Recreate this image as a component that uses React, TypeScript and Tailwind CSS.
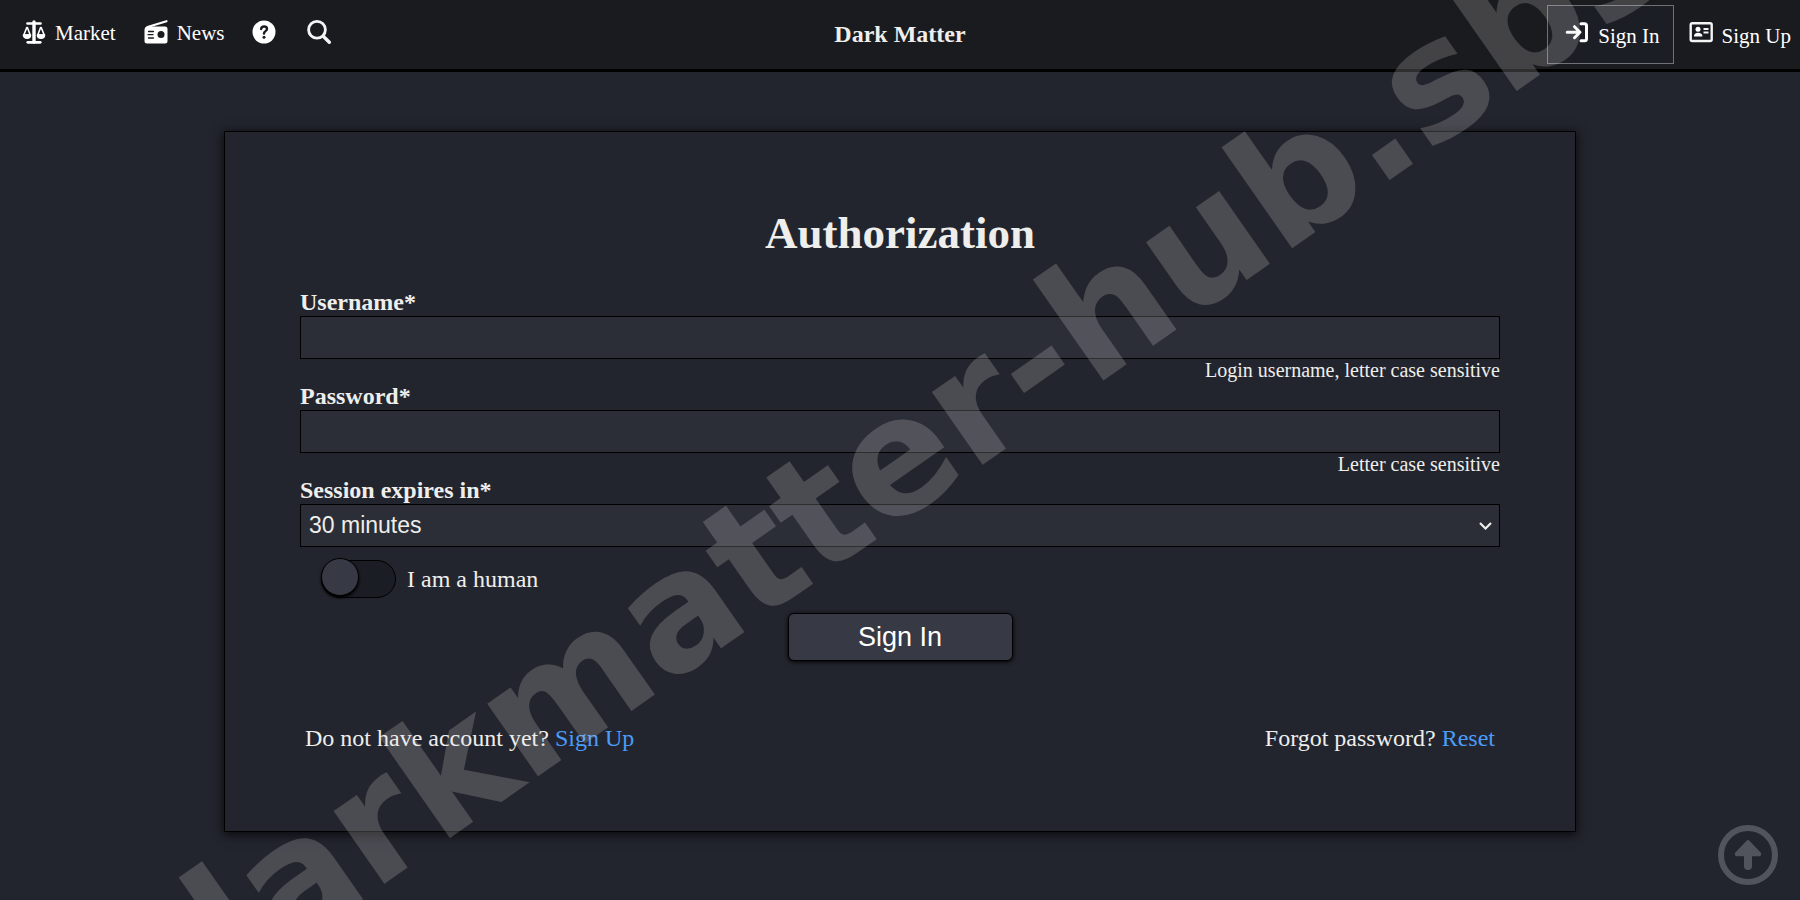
import type { ReactNode } from 'react';
import { useState } from 'react';

const MarketIcon = () => (
  <svg width="24" height="24" viewBox="0 0 24 24" fill="none" stroke="#fff" strokeWidth="1.6" strokeLinejoin="round" strokeLinecap="round">
    <path d="M12 2v20" strokeWidth="3.4" />
    <path d="M5.500 3.500h13" strokeWidth="2.600" />
    <path d="M5.800 22.300h12.400" strokeWidth="2.800" />
    <path d="M4.800 7.500 1.800 15h6.400L5.400 7.500Z" />
    <path d="M18.600 7.500 15.800 15h6.400l-3-7.500Z" />
    <path d="M1.500 15h7c0 4.200-7 4.200-7 0ZM15.500 15h7c0 4.200-7 4.200-7 0Z" fill="#fff" />
  </svg>
);

const NewsIcon = () => (
  <svg width="24" height="24" viewBox="0 0 24 24">
    <path d="M22.500 1.200 3.500 7" stroke="#fff" strokeWidth="2.200" strokeLinecap="round" />
    <path d="M3 6.500h18a2.500 2.500 0 0 1 2.500 2.500v12a2.500 2.500 0 0 1-2.500 2.500H3A2.500 2.500 0 0 1 .5 21V9.500A3 3 0 0 1 3 6.500Z" fill="#fff" />
    <circle cx="17" cy="14.500" r="3.500" fill="#1a1b1f" />
    <path d="M4.500 11.500h5M4 14.700h5M4.500 18h5" stroke="#1a1b1f" strokeWidth="1.300" strokeLinecap="round" />
  </svg>
);

const HelpIcon = () => (
  <svg width="24" height="24" viewBox="0 0 24 24" fill="none">
    <circle cx="12" cy="12" r="11.500" fill="#fff" />
    <path d="M9.200 9c.2-3.300 5.800-3.200 5.800-.1 0 2.200-3 2.200-3 4.600" stroke="#1a1b1f" strokeWidth="2.400" strokeLinecap="round" />
    <circle cx="12" cy="17.200" r="1.500" fill="#1a1b1f" />
  </svg>
);

const SearchIcon = () => (
  <svg width="24" height="24" viewBox="0 0 24 24" fill="none" stroke="#f4f4f4" strokeLinecap="round">
    <circle cx="10" cy="9.800" r="8.400" strokeWidth="2.800" />
    <path d="m16.500 16.500 5.800 5.800" strokeWidth="3.400" />
  </svg>
);

const SignInIcon = () => (
  <svg width="24" height="24" viewBox="0 0 24 24" fill="none" stroke="#fff" strokeWidth="3" strokeLinecap="round" strokeLinejoin="round">
    <path d="M2.200 12.200h12.500M9.500 6.700l5.500 5.500-5.500 5.500" />
    <path d="M16 3.800h3.500a2 2 0 0 1 2 2v13a2 2 0 0 1-2 2H16" />
  </svg>
);

const SignUpIcon = () => (
  <svg width="24" height="24" viewBox="0 0 24 24" fill="none" stroke="#f4f4f4">
    <rect x="1.700" y="3.200" width="21" height="17.800" rx="1.500" strokeWidth="2.400" />
    <circle cx="9" cy="9.300" r="2.500" fill="#fff" stroke="none" />
    <path d="M5 16.500c0-2.600 1.500-3.700 4-3.700s4.500 1.100 4.500 3.700Z" fill="#fff" stroke="none" />
    <path d="M14.500 9h5M14.500 12.500h5" strokeWidth="2" />
  </svg>
);

const Field = ({ id, label, hint, children }: { id: string; label: string; hint?: string; children: ReactNode }) => (
  <div className="flex flex-col">
    <label htmlFor={id} className="text-[24px] leading-[27px] font-bold">{label}</label>
    {children}
    {hint && <p className="pb-[2px] text-right text-[20px] leading-[22px]">{hint}</p>}
  </div>
);

const Header = () => (
  <header className="grid h-[72px] grid-cols-[1fr_auto_1fr] items-center border-b-[3px] border-black bg-[#1a1b1f]">
    <nav className="flex items-center gap-7 pb-1 pl-[22px] text-[21px] leading-6 text-white">
      <a href="#market" className="flex items-center gap-[9px]"><span className="pb-[2px]"><MarketIcon /></span>Market</a>
      <a href="#news" className="flex items-center gap-[9px]"><span className="pb-[2px]"><NewsIcon /></span>News</a>
      <a href="#help" aria-label="Help" className="pb-[2px]"><HelpIcon /></a>
      <a href="#search" aria-label="Search" className="ml-[3px] pb-[2px]"><SearchIcon /></a>
    </nav>
    <a href="#home" className="pb-[2px] text-[24px] leading-7 font-bold">Dark Matter</a>
    <nav className="flex items-center justify-end pr-[9px] text-[21px] leading-6 text-white">
      <a href="#signin" className="flex h-[59px] items-center gap-[9px] border border-[#707174] bg-[#1c1e26] pt-[2px] pr-[13px] pl-[17px]">
        <span className="pb-2"><SignInIcon /></span>Sign In
      </a>
      <a href="#signup" className="flex h-[59px] items-center gap-[9px] pt-[2px] pl-[15px]">
        <span className="pb-2"><SignUpIcon /></span>Sign Up
      </a>
    </nav>
  </header>
);

const App = () => {
  const [human, setHuman] = useState(false);

  return (
    <div className="min-h-screen bg-[#23252e] font-['Liberation_Serif',serif] text-[#eeeeec]">
      <Header />
      <main className="mx-auto mt-[60px] w-3/4 bg-[#23252e] px-[75px] pt-[74px] pb-[79px] shadow-[0_0_0_1px_#000,0_2px_10px_2px_rgba(0,0,0,0.7)]">
        <h1 className="text-center text-[45px] leading-[54px] font-bold">Authorization</h1>
        <form className="mt-[29px]" onSubmit={(e) => e.preventDefault()}>
          <Field id="username" label="Username*" hint="Login username, letter case sensitive">
            <input id="username" type="text" className="h-[43px] border border-black bg-[#2c2e37] px-2 font-['Liberation_Sans',sans-serif] text-[23px]" />
          </Field>
          <Field id="password" label="Password*" hint="Letter case sensitive">
            <input id="password" type="password" className="h-[43px] border border-black bg-[#2c2e37] px-2 font-['Liberation_Sans',sans-serif] text-[23px]" />
          </Field>
          <Field id="session" label="Session expires in*">
            <div className="grid items-center">
              <select id="session" className="col-start-1 row-start-1 h-[43px] appearance-none border border-black bg-[#2c2e37] px-2 font-['Liberation_Sans',sans-serif] text-[23px]">
                <option>30 minutes</option>
                <option>1 hour</option>
                <option>1 day</option>
              </select>
              <svg className="pointer-events-none col-start-1 row-start-1 mr-2 justify-self-end" width="13" height="8" viewBox="0 0 13 8" fill="none">
                <path d="m1 1 5.500 5.500L12 1" stroke="#eeeeec" strokeWidth="2.200" />
              </svg>
            </div>
          </Field>
          <label className="mt-[11px] ml-[21px] flex w-fit gap-[11px] text-[24px] leading-[42px]">
            <input type="checkbox" checked={human} onChange={(e) => setHuman(e.target.checked)} className="peer sr-only" />
            <span className="mt-[2px] flex h-[38px] w-[75px] rounded-full border border-black bg-[#1b1d24] peer-checked:justify-end">
              <span className="-mt-[3px] -ml-px size-[38px] rounded-full border border-black bg-[#373a45] shadow-[0_2px_3px_#000]" />
            </span>
            I am a human
          </label>
          <button type="submit" className="mx-auto mt-[13px] block h-[48px] w-[225px] rounded-md border border-black bg-[#373a44] font-['Liberation_Sans',sans-serif] text-[27px] leading-8 text-white shadow-[0_1px_4px_#000]">
            Sign In
          </button>
        </form>
        <div className="mt-[63px] flex justify-between px-[5px] text-[24px] leading-7">
          <p>Do not have account yet? <a href="#signup" className="text-[#4b9cf8]">Sign Up</a></p>
          <p>Forgot password? <a href="#reset" className="text-[#4b9cf8]">Reset</a></p>
        </div>
      </main>

      <button type="button" aria-label="Back to top" className="fixed right-[22px] bottom-[15px]">
        <svg width="60" height="60" viewBox="0 0 60 60" fill="none" stroke="#52545d">
          <circle cx="30" cy="30" r="27" strokeWidth="6" />
          <path d="M30 41V26" strokeWidth="8" strokeLinecap="round" />
          <path d="M30 17.500 41 29H19Z" fill="#52545d" strokeWidth="4.500" strokeLinejoin="round" />
        </svg>
      </button>

      {/* domain watermark across the whole window */}
      <div className="pointer-events-none fixed inset-0 flex items-center justify-center overflow-hidden pt-[6px] pl-1">
        <span className="-rotate-35 font-['DejaVu_Sans',sans-serif] text-[9vw] leading-none font-bold whitespace-nowrap text-[#ebe6e6]/20">
          darkmatter-hub.sbs
        </span>
      </div>
    </div>
  );
};

export default App;
